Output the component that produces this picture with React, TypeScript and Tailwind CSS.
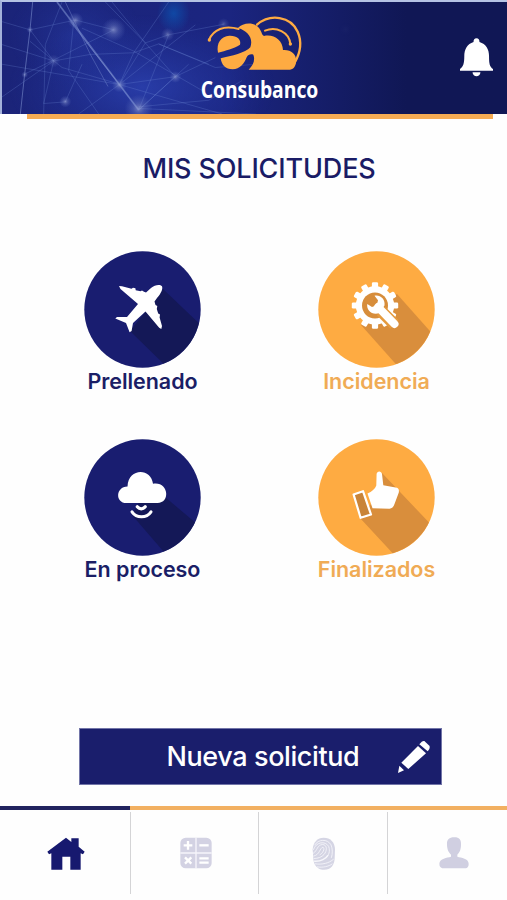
import React from 'react';

const NAVY = '#191d70';
const ORANGE = '#feab42';

function NetworkBackground() {
  return (
    <svg className="absolute inset-0 h-full w-full" viewBox="0 0 1080 342" preserveAspectRatio="none" fill="none">
      <defs>
        <radialGradient id="dot">
          <stop offset="0" stopColor="#97a2d3" stopOpacity="0.7" />
          <stop offset="0.4" stopColor="#7d8ccb" stopOpacity="0.35" />
          <stop offset="1" stopColor="#6c80cc" stopOpacity="0" />
        </radialGradient>
        <radialGradient id="glow">
          <stop offset="0" stopColor="#2f47ba" stopOpacity="0.7" />
          <stop offset="1" stopColor="#2438a4" stopOpacity="0" />
        </radialGradient>
        <radialGradient id="cyan">
          <stop offset="0" stopColor="#0b57b5" stopOpacity="0.7" />
          <stop offset="1" stopColor="#0b57b5" stopOpacity="0" />
        </radialGradient>
      </defs>
      <ellipse cx="420" cy="260" rx="400" ry="220" fill="url(#glow)" />
      <ellipse cx="220" cy="100" rx="200" ry="160" fill="url(#glow)" opacity="0.5" />
      <ellipse cx="515" cy="35" rx="50" ry="60" fill="url(#cyan)" />
      <g stroke="#8ea2dc" strokeOpacity="0.5" strokeWidth="3">
        <path d="M92 0L84 85L68 220L55 342" />
        <path d="M165 0L410 330" strokeWidth="5" />
        <path d="M190 0L265 160L318 258" strokeOpacity="0.35" />
        <path d="M205 60L352 252" strokeOpacity="0.4" />
      </g>
      <g stroke="#7590da" strokeOpacity="0.3" strokeWidth="2.5">
        <path d="M310 0L430 125L500 100L665 68" />
        <path d="M430 125L352 252L520 228L640 170" />
        <path d="M352 252L230 342M352 252L0 190M352 252L660 342" />
        <path d="M84 85L155 180L265 160L395 155L470 128L620 190" />
        <path d="M84 120L180 200L350 250L410 330L560 190" />
        <path d="M0 60L84 85L220 55L335 85L150 180L68 220" />
        <path d="M155 180L125 310L190 305L240 190" />
        <path d="M500 100L410 330L520 228L430 125L330 0" />
        <path d="M180 0L130 130L125 342M215 60L200 210L290 342" />
        <path d="M352 252L395 155L500 0M470 128L640 200L762 190" />
        <path d="M410 320L620 300L720 240M352 252L580 70M410 325L762 342" />
        <path d="M0 130L155 180L0 290M240 80L395 150L600 270" />
      </g>
      <g fill="url(#dot)">
        <circle cx="220" cy="56" r="24" />
        <circle cx="335" cy="85" r="36" />
        <circle cx="190" cy="304" r="18" />
        <circle cx="84" cy="85" r="10" />
        <circle cx="68" cy="222" r="10" />
        <circle cx="155" cy="180" r="20" opacity="0.6" />
        <circle cx="352" cy="254" r="22" />
        <circle cx="410" cy="325" r="42" />
        <circle cx="497" cy="99" r="20" opacity="0.8" />
        <circle cx="520" cy="229" r="18" />
        <circle cx="665" cy="67" r="18" opacity="0.6" />
        <circle cx="1032" cy="84" r="22" opacity="0.4" />
      </g>
    </svg>
  );
}

function Logo() {
  return (
    <svg className="relative h-[113px] w-[140px] overflow-visible" viewBox="0 0 420 339">
      <g fill="none" stroke={ORANGE} strokeLinecap="round">
        <path d="M57 120C70 88 103 75 146 87" strokeWidth="6" />
        <path d="M201 74C240 40 302 48 323 95C337 127 330 160 314 188" strokeWidth="7" />
        <path d="M225 92C258 78 298 96 301 132" strokeWidth="6" />
      </g>
      <circle cx="58" cy="120" r="5" fill={ORANGE} />
      <circle cx="301" cy="132" r="5" fill={ORANGE} />
      <path
        fill={ORANGE}
        d="M144 84C160 66 200 64 212 92C216 98 215 104 222 108C250 101 278 120 279 150C305 148 322 165 318 188C315 205 305 209 296 209H176C190 196 196 180 190 164C182 161 173 165 170 172C163 191 150 208 128 208C106 208 95 195 92 175C125 168 166 158 181 142C190 116 176 94 144 84Z"
      />
      <path fill={ORANGE} d="M84 158C78 128 94 108 118 107C140 106 155 118 150 134C130 147 108 151 84 158Z" />
      <text
        x="32"
        y="295"
        fill="#fff"
        fontSize="72"
        fontWeight="700"
        textLength="353"
        lengthAdjust="spacingAndGlyphs"
        fontFamily="'Open Sans', sans-serif"
      >
        Consubanco
      </text>
    </svg>
  );
}

function BellIcon() {
  return (
    <svg className="h-[39px] w-[33px]" viewBox="390 115 100 118" fill="#fff">
      <path d="M440 116c6 0 9 4 9 11c20 6 29 22 29 43c0 24 2 31 12 39v5H390v-5c10-8 13-17 13-39c0-21 9-37 28-43c0-7 3-11 9-11z" />
      <path d="M428 219h24c-1 16-23 16-24 0z" />
    </svg>
  );
}

function PlaneIcon() {
  return (
    <path
      fill="#fff"
      d="M78 35.3C79.2 38.5 76.6 43 73 47L70.5 50.5L71.5 54L73.3 55L72.8 58L74.2 62.5L76 63.5L75.6 66.5L78 75L77.3 78L75.2 76.8L61.5 60.5L49 72L47.6 80L45.6 81.3L42 72L31.3 67.5L33 66L43 66L54 53L36.5 38L35 35L38 35.2L47.5 37.8L49 36.8L51.4 37.3L51.7 39.3L56.5 40.3L58 39.6L60 40.8L62 41.5L67 37C71 33.6 76 33 78 35.3Z"
    />
  );
}

const teeth = Array.from({ length: 12 }, (_, i) => i * 30);

function GearIcon() {
  return (
    <>
      <g fill="#fff">
        <circle cx="57" cy="54.5" r="19.2" />
        {teeth.map((a) => (
          <rect key={a} x="53.9" y="31.3" width="6.2" height="8" rx="1.3" transform={`rotate(${a} 57 54.5)`} />
        ))}
      </g>
      <circle cx="57" cy="54.5" r="13" fill="#d78d3b" />
      <path d="M63 60L76.5 73.5" stroke="#e59a3e" strokeWidth="12" />
      <path d="M60 56L76.5 73" stroke="#fff" strokeWidth="8" strokeLinecap="round" />
      <path
        fill="#fff"
        d="M56.5 44.8C62 43.5 67.5 48 66.5 54.5L61.5 62C54.5 65 48 59 49.3 53L54 56L58.8 54.3L60 49.2Z"
      />
    </>
  );
}

function CloudIcon() {
  return (
    <>
      <path
        fill="#fff"
        d="M42.5 64C31 64 31.5 47.5 43.5 47.4C44.2 28.5 67.3 28.5 69 44.8C84.5 42 87 64 73.5 64Z"
      />
      <g fill="none" stroke="#fff" strokeLinecap="round">
        <path d="M53.3 67.8C55.5 70.5 59 70.5 61.2 67.8" strokeWidth="3.2" />
        <path d="M48 72.8C52.5 79.5 62.5 79.5 67 72.8" strokeWidth="3" />
      </g>
    </>
  );
}

function ThumbIcon() {
  return (
    <>
      <path
        fill="#fff"
        d="M49.5 54.5C54 52.500 57 50 58.3 46.5L58.600 35C59 31.5 63.5 31.5 64 35L65.3 46.3L79 48.8Q81.5 50 80.8 53.5L76.5 65Q75 69.6 71.5 69.7L54.5 69.2Z"
      />
      <path d="M35.6 55.5L45 52.2L53 75.5L42.6 78.8Z" fill="#c98438" stroke="#fff" strokeWidth="2.2" strokeLinejoin="round" />
    </>
  );
}

interface StatusItem {
  id: string;
  label: string;
  color: string;
  shade: string;
  labelClass: string;
  shadow: string;
  icon: React.ReactNode;
}

const items: StatusItem[] = [
  {
    id: 'prellenado',
    label: 'Prellenado',
    color: NAVY,
    shade: '#141857',
    labelClass: 'text-[#1b1e66]',
    shadow: 'M79 38L120 77V120H87L46 80L62 60Z',
    icon: <PlaneIcon />,
  },
  {
    id: 'incidencia',
    label: 'Incidencia',
    color: ORANGE,
    shade: '#d98e3c',
    labelClass: 'text-[#f0ab55]',
    shadow: 'M79 43L120 89V120H84L43 74L57 54Z',
    icon: <GearIcon />,
  },
  {
    id: 'proceso',
    label: 'En proceso',
    color: NAVY,
    shade: '#141857',
    labelClass: 'text-[#1b1e66]',
    shadow: 'M81 58L120 91V120H86L48 76L57 60Z',
    icon: <CloudIcon />,
  },
  {
    id: 'finalizados',
    label: 'Finalizados',
    color: ORANGE,
    shade: '#d98e3c',
    labelClass: 'text-[#f0ab55]',
    shadow: 'M64 34L120 93V120H80L42 79L57 60Z',
    icon: <ThumbIcon />,
  },
];

function StatusButton({ item }: { item: StatusItem }) {
  return (
    <button className="flex flex-col items-center">
      <svg className="h-[117px] w-[117px]" viewBox="0 0 117 117" fill="none">
        <defs>
          <clipPath id={`clip-${item.id}`}>
            <circle cx="58.5" cy="58.5" r="58" />
          </clipPath>
        </defs>
        <circle cx="58.5" cy="58.5" r="58.2" fill={item.color} />
        <path d={item.shadow} fill={item.shade} clipPath={`url(#clip-${item.id})`} />
        {item.icon}
      </svg>
      <span
        className={`text-[21.5px] leading-[26px] font-semibold tracking-[-0.05px] whitespace-nowrap ${item.labelClass}`}
      >
        {item.label}
      </span>
    </button>
  );
}

function PencilIcon() {
  return (
    <svg className="h-[34px] w-[34px]" viewBox="1012 75 102 102" fill="#fff">
      <path d="M1025 143L1075 93L1099 115L1046 162Z" />
      <path d="M1079 88Q1088 76 1094 78L1109 92Q1113 98 1104 109Z" />
      <path d="M1019 152L1033 166L1015 174Z" />
    </svg>
  );
}

function HomeIcon() {
  return (
    <svg className="h-[34px] w-[38px]" viewBox="141 125 114 102" fill="#17196f">
      <path d="M198 127L214 140V129H236V154L254 169L249 177L242 174V223H211V184H187V223H154V174L147 177L142 169Z" />
    </svg>
  );
}

function CalculatorIcon() {
  return (
    <svg className="h-[32px] w-[32px]" viewBox="539 125 96 96">
      <rect x="540" y="127" width="94" height="92" rx="16" fill="#d3d2e3" />
      <path d="M587 127V219M540 173H634" stroke="#f6f5fb" strokeWidth="4" />
      <g stroke="#fff" strokeWidth="7" fill="none">
        <path d="M550 150H576M563 137V163" />
        <path d="M597 150H625" />
        <path d="M554 186L573 205M573 186L554 205" />
        <path d="M597 189H625M597 202H625" />
      </g>
    </svg>
  );
}

function FingerprintIcon() {
  return (
    <svg className="h-[34px] w-[24px]" viewBox="176 124 72 101" fill="none">
      <path
        fill="#d5d5e4"
        d="M211 126C232 126 244 140 245 160L244 188C243 208 232 222 213 222C194 222 182 210 180 190L178 160C180 140 192 126 211 126Z"
      />
      <g stroke="#f7f7fb" strokeWidth="2.5">
        <path d="M184 148C194 130 222 128 233 147C238 158 238 174 234 186" />
        <path d="M180 162C188 138 216 134 226 152C231 166 227 178 217 188" />
        <path d="M179 173C193 164 191 147 208 146C222 147 222 165 212 176C205 184 194 188 181 188" />
        <path d="M180 181C200 177 199 156 209 154C216 158 208 173 199 177" />
        <path d="M182 196C200 197 215 192 224 178" strokeWidth="4" />
        <path d="M185 204C207 207 227 202 241 190M191 213C208 216 226 212 237 204" />
      </g>
    </svg>
  );
}

function UserIcon() {
  return (
    <svg className="h-[32px] w-[30px]" viewBox="554 125 90 96" fill="#d0cfe1">
      <path d="M599 126C613 125 621 133 620 147C620 163 616 172 609 178V184C621 188 643 188 643 205C643 216 638 219 628 219H570C560 219 555 215 555 205C556 188 578 188 590 184V178C583 172 578 163 578 147C577 133 585 126 599 126Z" />
    </svg>
  );
}

export default function App() {
  return (
    <div className="flex h-[900px] w-[507px] flex-col overflow-hidden bg-[#fefefe] font-['Inter','Liberation_Sans',sans-serif]">
      <header className="relative flex h-[114px] shrink-0 justify-center border-t-2 border-l-2 border-t-[#b5c3e4] border-l-[#a3b1da] bg-linear-to-r from-[#1b2479] via-[#1b2580] via-45% to-[#101755] to-80%">
        <div className="absolute inset-y-0 left-0 w-[360px] overflow-hidden mask-r-from-60%">
          <NetworkBackground />
        </div>
        <div className="relative -mt-0.5 ml-2.5">
          <Logo />
        </div>
        <button className="absolute top-[36px] right-[14px]">
          <BellIcon />
        </button>
      </header>
      <div className="mr-3.5 ml-[27px] h-[5px] shrink-0 bg-[#f6ac54]" />

      <main className="flex grow flex-col items-center">
        <h1 className="mt-[33px] ml-[11px] text-[27px] leading-[34px] font-medium tracking-[-0.15px] text-[#1a1c66]">
          MIS SOLICITUDES
        </h1>
        <div className="mt-[65px] ml-3 grid grid-cols-[117px_117px] justify-items-center gap-x-[117px] gap-y-[45px]">
          {items.map((item) => (
            <StatusButton key={item.id} item={item} />
          ))}
        </div>
        <button className="mt-[146px] ml-[13px] flex h-[57px] w-[363px] items-center border border-[#7275a8] bg-[#1a1e6c] pr-2.5 pl-[87px]">
          <span className="text-[27px] leading-[34px] font-medium tracking-[-0.4px] whitespace-nowrap text-white">
            Nueva solicitud
          </span>
          <span className="ml-auto">
            <PencilIcon />
          </span>
        </button>
      </main>

      <nav className="flex h-[94px] shrink-0 flex-col">
        <div className="flex h-[4px]">
          <div className="w-[130px] bg-[#21235f]" />
          <div className="grow bg-[#f2b061]" />
        </div>
        <div className="mt-0.5 grid h-[82px] grid-cols-[131px_128px_129px_119px]">
          <button className="flex items-center justify-center border-r-[1.5px] border-[#d4d4d6] pt-0.5 pl-0.5">
            <HomeIcon />
          </button>
          <button className="flex items-center justify-center border-r-[1.5px] border-[#d4d4d6] pl-0.5">
            <CalculatorIcon />
          </button>
          <button className="flex items-center justify-center border-r-[1.5px] border-[#d4d4d6] pt-px pl-0.5">
            <FingerprintIcon />
          </button>
          <button className="flex items-center justify-center pl-3">
            <UserIcon />
          </button>
        </div>
      </nav>
    </div>
  );
}
